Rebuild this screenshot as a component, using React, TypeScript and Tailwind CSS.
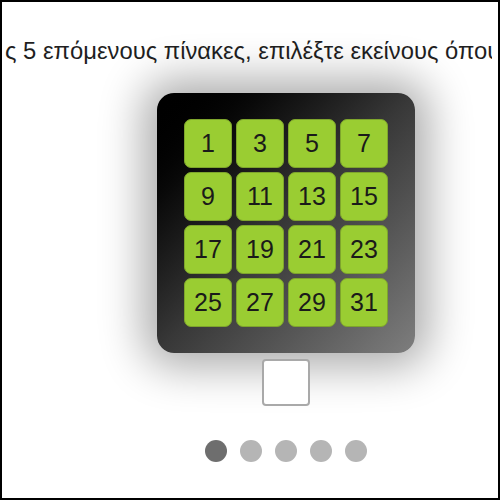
const numbers = [1, 3, 5, 7, 9, 11, 13, 15, 17, 19, 21, 23, 25, 27, 29, 31];

function Tile({ n }: { n: number }) {
  return (
    <div className="flex h-[49px] w-[48px] items-center justify-center rounded-[7px] border border-[#7ea52c] bg-[#9acd32] text-[25px] leading-none text-[#1a1a1a]">
      {n}
    </div>
  );
}

export default function App() {
  return (
    <div
      className="flex h-[500px] w-[500px] flex-col overflow-hidden border-2 border-black bg-white"
      style={{ fontFamily: '"Liberation Sans", Arial, sans-serif' }}
    >
      <div className="mr-[6px] mt-[35px] overflow-hidden whitespace-nowrap pl-[3px] text-[23.8px] leading-[28px] text-[#1f1f1f]">
        ς 5 επόμενους πίνακες, επιλέξτε εκείνους όπου εμφανίζεται ο αριθμός σας
      </div>

      <div className="flex flex-col items-center pl-[72px]">
        <div className="mt-[28px] rounded-[17px] bg-linear-to-br from-black via-[#383838] to-[#7e7e7e] px-[27px] py-[26px] shadow-[0_0_44px_14px_rgba(0,0,0,0.33)]">
          <div className="grid grid-cols-4 gap-[4px]">
            {numbers.map((n) => (
              <Tile key={n} n={n} />
            ))}
          </div>
        </div>

        <div className="mt-[6px] h-[47px] w-[48px] rounded-[4px] border-2 border-[#a9a9a9] bg-white" />

        <div className="mt-[34px] flex gap-[13px]">
          <span className="h-[22px] w-[22px] rounded-full bg-[#6e6e6e]" />
          <span className="h-[22px] w-[22px] rounded-full bg-[#b5b5b5]" />
          <span className="h-[22px] w-[22px] rounded-full bg-[#b5b5b5]" />
          <span className="h-[22px] w-[22px] rounded-full bg-[#b5b5b5]" />
          <span className="h-[22px] w-[22px] rounded-full bg-[#b5b5b5]" />
        </div>
      </div>
    </div>
  );
}
